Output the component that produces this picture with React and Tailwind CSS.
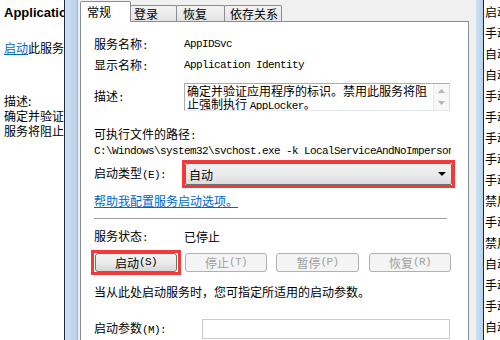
import React from 'react';

// SimSun-like half-width Latin: 11px mono squeezed to a 6px advance
function M({ children }) {
  return (
    <span className="font-['Liberation_Mono','Noto_Sans_CJK_SC',monospace] text-[11px] tracking-[-0.6px]">
      {children}
    </span>
  );
}

function Tab({ label, active, className }) {
  if (active) {
    return (
      <div className={`relative z-10 -mb-px h-[21px] bg-white border border-b-0 border-[#898c95] rounded-t-[2px] flex items-start pt-[2px] ${className}`}>
        {label}
      </div>
    );
  }
  return (
    <div className={`-ml-px h-[16px] bg-gradient-to-b from-[#f3f3f3] to-[#e3e3e3] border border-b-0 border-[#898c95] rounded-t-[2px] flex items-center ${className}`}>
      {label}
    </div>
  );
}

function Btn({ children, disabled, className }) {
  return (
    <div
      className={`h-[19px] rounded-[3px] border flex items-center justify-center ${
        disabled
          ? 'border-[#adb2b5] bg-[#f4f4f4] text-[#a0a0a0]'
          : 'border-[#707070] bg-gradient-to-b from-[#f2f2f2] via-[#ebebeb] to-[#d6d6d6] text-black'
      } ${className}`}
    >
      {children}
    </div>
  );
}

const states = ['启动', '手动', '自动', '自动', '手动', '手动', '手动', '手动', '手动', '禁用', '手动', '禁用', '自动', '手动', '手动', '自动'];

export default function App() {
  return (
    <div className="w-[500px] h-[340px] flex overflow-hidden bg-white text-[12px] leading-[15px] text-black font-['Noto_Sans_CJK_SC',sans-serif]">
      {/* services console, left pane */}
      <div className="w-[64px] shrink-0 overflow-hidden whitespace-nowrap pl-[4px] bg-white">
        <div className="h-[24px] flex items-center font-['Liberation_Sans',sans-serif] font-bold text-[13px]">
          Application Identity
        </div>
        <div className="mt-[16px] h-[15px]">
          <span className="text-[#0066cc] underline">启动</span>此服务
        </div>
        <div className="mt-[38px] h-[15px]">描述:</div>
        <div className="h-[15px]">确定并验证应用程序的标识</div>
        <div className="h-[15px]">服务将阻止强制执行</div>
      </div>

      {/* window frame */}
      <div className="w-px shrink-0 bg-[#1f2a36]" />
      <div className="w-[12px] shrink-0 bg-gradient-to-r from-[#cfe0f3] to-[#b9d0ea]" />

      {/* properties dialog */}
      <div className="w-[399px] shrink-0 bg-[#f0f0f0] pl-[2px] border-l border-[#9fb6d2]">
        <div className="h-[21px] flex items-end">
          <Tab active label="常规" className="w-[51px] pl-[6px]" />
          <Tab label="登录" className="w-[47px] pl-[3px]" />
          <Tab label="恢复" className="w-[49px] pl-[6px]" />
          <Tab label="依存关系" className="w-[58px] pl-[5px]" />
        </div>

        <div className="w-[389px] h-[330px] bg-white border border-[#898c95] pl-[13px] pt-[12px]">
          <div className="h-[21px] flex items-center">
            <div className="w-[90px]">服务名称<M>:</M></div>
            <M>AppIDSvc</M>
          </div>
          <div className="h-[21px] flex items-center">
            <div className="w-[90px]">显示名称<M>:</M></div>
            <M>Application Identity</M>
          </div>

          <div className="mt-[7px] h-[28px] flex items-start">
            <div className="w-[90px] pt-[5px]">描述<M>:</M></div>
            <div className="w-[266px] h-[28px] border border-[#abadb3] border-r-[#dbdfe6] border-b-[#e3e9ef] flex">
              <div className="flex-1 px-[2px] leading-[13px] overflow-hidden">
                确定并验证应用程序的标识。禁用此服务将阻止强制执行 <M>AppLocker</M>。
              </div>
              <div className="w-[16px] bg-[#f7f7f7] border-l border-[#eaeaea] flex flex-col items-center justify-between py-[5px]">
                <svg width="7" height="4" viewBox="0 0 7 4"><path d="M0 4 L3.5 0 L7 4 Z" fill="#b4b4b4" /></svg>
                <svg width="7" height="4" viewBox="0 0 7 4"><path d="M0 0 L3.5 4 L7 0 Z" fill="#b4b4b4" /></svg>
              </div>
            </div>
          </div>

          <div className="mt-[15px] h-[15px]">可执行文件的路径<M>:</M></div>
          <div className="h-[15px] w-[357px] overflow-hidden whitespace-nowrap">
            <M>C:\Windows\system32\svchost.exe -k LocalServiceAndNoImpersonation</M>
          </div>

          <div className="mt-[4px] h-[28px] flex items-center">
            <div className="w-[88px]">
              启动类型<M>(E):</M>
            </div>
            <div className="w-[273px] h-[28px] border-[3px] border-[#f23a3a]">
              <div className="h-full rounded-[2px] border border-[#707070] bg-gradient-to-b from-[#f2f2f2] via-[#ebebeb] to-[#dcdcdc] flex items-center pl-[3px] pr-[5px]">
                <span className="flex-1">自动</span>
                <svg width="8" height="4" viewBox="0 0 8 4"><path d="M0 0 L8 0 L4 4 Z" fill="#000" /></svg>
              </div>
            </div>
          </div>

          <div className="mt-[5px] h-[15px]">
            <span className="text-[#0066cc] underline">帮助我配置服务启动选项。</span>
          </div>

          <div className="mt-[10px] w-[353px] h-px bg-[#a0a0a0]" />

          <div className="mt-[10px] h-[15px] flex items-center">
            <div className="w-[90px]">服务状态<M>:</M></div>
            <div>已停止</div>
          </div>

          <div className="mt-[6px] h-[25px] flex items-center">
            <div className="-ml-[3px] w-[90px] h-[25px] border-[3px] border-[#f23a3a] pl-[1px]">
              <Btn className="w-[82px]">
                启动<M>(S)</M>
              </Btn>
            </div>
            <Btn disabled className="ml-[4px] w-[82px]">
              停止<M>(T)</M>
            </Btn>
            <Btn disabled className="ml-[9px] w-[83px]">
              暂停<M>(P)</M>
            </Btn>
            <Btn disabled className="ml-[10px] w-[82px]">
              恢复<M>(R)</M>
            </Btn>
          </div>

          <div className="mt-[9px] h-[15px]">当从此处启动服务时，您可指定所适用的启动参数。</div>

          <div className="mt-[20px] h-[20px] flex items-center">
            <div className="w-[108px]">
              启动参数<M>(M):</M>
            </div>
            <div className="w-[248px] h-[20px] border border-[#c9ccd2] bg-white" />
          </div>
        </div>
      </div>

      {/* window frame, right */}
      <div className="w-[7px] shrink-0 bg-gradient-to-r from-[#cfe0f3] to-[#b9d0ea]" />
      <div className="w-px shrink-0 bg-[#1f2a36]" />

      {/* services list, startup type column */}
      <div className="w-[16px] shrink-0 overflow-hidden whitespace-nowrap bg-white pt-px">
        {states.map((s, i) => (
          <div key={i} className="h-[21px] flex items-center pl-px">
            {s}
          </div>
        ))}
      </div>
    </div>
  );
}
